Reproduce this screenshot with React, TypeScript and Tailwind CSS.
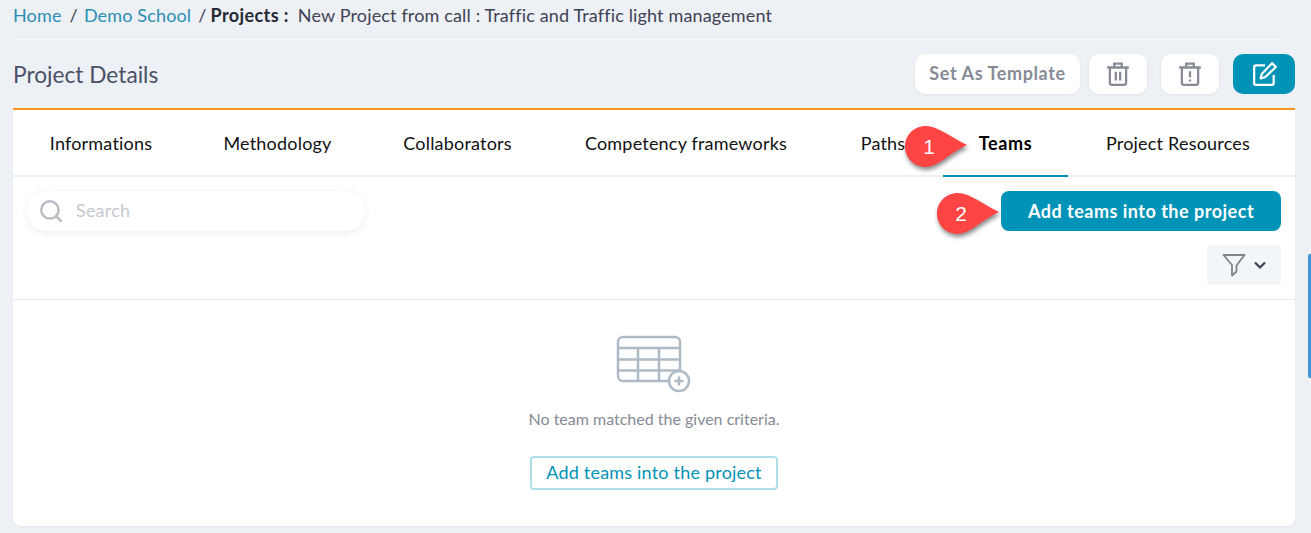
import React from "react";
import { Search } from "lucide-react";

function Callout({ n, className }: { n: string; className: string }) {
  return (
    <div className={`absolute w-[62px] h-[41px] ${className}`}>
      <svg width="62" height="41" viewBox="0 0 62 41" className="absolute left-0 top-0 overflow-visible drop-shadow-[1px_3px_2px_rgba(0,0,0,0.45)]">
        <path d="M21 0 C32 0 46 11 62 19 C46 26 33 41 21 41 C9 41 0 32 0 20.5 C0 9 9 0 21 0 Z" fill="#ff4444" />
      </svg>
      <span className="absolute left-[17px] top-[8px] w-[14px] text-center text-[21px] leading-[26px] text-white font-['Liberation_Sans',sans-serif]">{n}</span>
    </div>
  );
}

function Tab({ label, className, active }: { label: string; className: string; active?: boolean }) {
  return (
    <div className={`flex h-[67px] items-center justify-center text-[18px] whitespace-nowrap ${className} ${active ? "pt-[1px] font-bold tracking-[0.6px] text-black border-b-[2px] border-[#0093b8]" : "pb-[1px] tracking-[0.2px] text-[#111111]"}`}>
      {label}
    </div>
  );
}

export default function App() {
  return (
    <div className="relative h-[533px] w-[1311px] overflow-hidden bg-[#edf0f4] font-['Lato',sans-serif]">
      <div className="ml-[13px] w-[1282px]">
        <div className="mr-[14px] flex h-[40px] items-center border-b border-[#f7f8fa] pb-[9px] text-[18px] tracking-[0.15px] text-[#3f4254] whitespace-nowrap">
          <span className="text-[#2b8fb3]">Home</span>
          <span className="ml-[8px]">/</span>
          <span className="ml-[6px] text-[#2b8fb3]">Demo School</span>
          <span className="ml-[7px]">/</span>
          <span className="ml-[4px] font-bold tracking-[0.4px] text-[#262833]">Projects :</span>
          <span className="ml-[9px]">New Project from call : Traffic and Traffic light management</span>
        </div>

        <div className="flex h-[70px] items-start justify-between border-b-[2px] border-[#f7941d] pt-[14px]">
          <h1 className="mt-[7px] text-[22.7px] leading-[28px] text-[#4b5068]">Project Details</h1>
          <div className="flex items-center">
            <button className="h-[40px] w-[165px] rounded-[10px] bg-white pb-[1px] text-[18px] font-bold tracking-[0.6px] text-[#868b96] shadow-[0_1px_3px_rgba(0,0,0,0.06)]">Set As Template</button>
            <button className="ml-[9px] flex h-[40px] w-[58px] items-center justify-center rounded-[10px] bg-white shadow-[0_1px_3px_rgba(0,0,0,0.06)]">
              <svg width="26" height="26" viewBox="0 0 24 24" fill="none" stroke="#868b96" strokeWidth="2.1">
                <path d="M2 6h20M8.500 6V2.500h7V6M4.500 6v14a2 2 0 0 0 2 2h11a2 2 0 0 0 2-2V6" />
                <path d="M10 10v8M14 10v8" />
              </svg>
            </button>
            <button className="ml-[14px] flex h-[40px] w-[58px] items-center justify-center rounded-[10px] bg-white shadow-[0_1px_3px_rgba(0,0,0,0.06)]">
              <svg width="26" height="26" viewBox="0 0 24 24" fill="none" stroke="#868b96" strokeWidth="2.1">
                <path d="M2 6h20M8.500 6V2.500h7V6M4.500 6v14a2 2 0 0 0 2 2h11a2 2 0 0 0 2-2V6" />
                <path d="M12 9.500v5.500M12 17v2" />
              </svg>
            </button>
            <button className="ml-[14px] flex h-[40px] w-[62px] items-center justify-center rounded-[10px] bg-[#0093b8] pl-[2px]">
              <svg width="26" height="26" viewBox="0 0 24 24" fill="none" stroke="#ffffff" strokeWidth="2.1" strokeLinejoin="round">
                <path d="M12 4H3.500a1.500 1.500 0 0 0-1.500 1.500v15A1.500 1.500 0 0 0 3.500 22h15a1.500 1.500 0 0 0 1.500-1.500V13" />
                <path d="M18.500 2l3.500 3.500L12 15l-4 1 1-4z" />
              </svg>
            </button>
          </div>
        </div>

        <div className="h-[416px] rounded-b-[8px] bg-white shadow-[0_1px_2px_rgba(0,0,0,0.04)]">
          <div className="flex h-[67px] border-b-[2px] border-[#edf0f4] pl-[1px]">
            <Tab label="Informations" className="w-[174px]" />
            <Tab label="Methodology" className="w-[179px]" />
            <Tab label="Collaborators" className="w-[181px]" />
            <Tab label="Competency frameworks" className="w-[276px]" />
            <Tab label="Paths" className="w-[118px]" />
            <Tab label="Teams" active className="ml-[1px] w-[125px]" />
            <Tab label="Project Resources" className="ml-[1px] w-[218px]" />
          </div>

          <div className="h-[123px] border-b border-[#e8eaee] px-[14px] pt-[14px]">
            <div className="flex items-start justify-between">
              <div className="flex h-[40px] w-[338px] items-center rounded-full bg-white pl-[11px] shadow-[0_2px_8px_rgba(0,0,0,0.07)]">
                <Search size={26} strokeWidth={2.300} className="text-[#b9bdc3]" />
                <span className="ml-[12px] pb-[1px] text-[18px] tracking-[0.2px] text-[#c6c8cd]">Search</span>
              </div>
              <button className="flex h-[40px] w-[280px] items-center justify-center rounded-[8px] bg-[#0093b8] text-[18px] font-bold tracking-[0.5px] text-white">Add teams into the project</button>
            </div>
            <div className="mt-[14px] flex justify-end">
              <div className="flex h-[40px] w-[74px] items-center justify-center gap-[7px] rounded-[4px] bg-[#f3f6f9]">
                <svg width="24" height="24" viewBox="0 0 24 24" fill="none" stroke="#7e8289" strokeWidth="1.800" strokeLinejoin="round">
                  <path d="M1.500 2h21l-8 10.500v6l-4.500 4v-10.500z" />
                </svg>
                <svg width="14" height="14" viewBox="0 0 14 14" fill="none" stroke="#3f4254" strokeWidth="2.200">
                  <path d="M2 4.500l5 5 5-5" />
                </svg>
              </div>
            </div>
          </div>

          <div className="flex flex-col items-center pt-[35px]">
            <svg width="76" height="58" viewBox="0 0 76 58" fill="none" stroke="#aebbc7" strokeWidth="2.500">
              <rect x="2" y="2" width="62" height="44" rx="5" />
              <path d="M2 13h62M2 24.500h62M2 35.500h62M22 13v33M43 13v33" />
              <circle cx="63" cy="46" r="10" fill="#ffffff" />
              <path d="M63 41.500v9M58.500 46h9" strokeWidth="2.500" />
            </svg>
            <div className="mt-[16px] text-[16px] leading-[20px] text-[#868b96]">No team matched the given criteria.</div>
            <button className="mt-[27px] h-[34px] w-[248px] rounded-[4px] border-[2px] border-[#b0dfe9] pb-[1px] text-[18px] tracking-[0.2px] text-[#0093b8]">Add teams into the project</button>
          </div>
        </div>
      </div>

      <Callout n="1" className="left-[905px] top-[126px]" />
      <Callout n="2" className="left-[937px] top-[193px]" />
      <div className="absolute right-0 top-[254px] h-[124px] w-[3px] rounded-l-[2px] bg-[#3f96d6]" />
    </div>
  );
}
